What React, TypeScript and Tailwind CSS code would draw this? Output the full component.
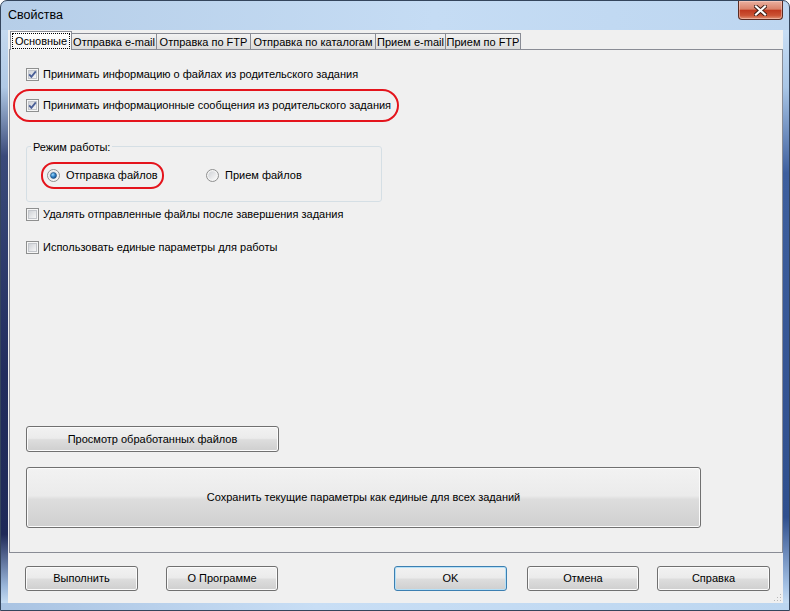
import React from 'react';
import clsx from 'clsx';

const TABS = [
  { label: 'Основные', w: 'w-[62px]' },
  { label: 'Отправка e-mail', w: 'w-[86px]' },
  { label: 'Отправка по FTP', w: 'w-[95px]' },
  { label: 'Отправка по каталогам', w: 'w-[126px]' },
  { label: 'Прием e-mail', w: 'w-[71px]' },
  { label: 'Прием по FTP', w: 'w-[76px]' },
];

function CheckBox({ checked }: { checked?: boolean }) {
  return (
    <svg width="13" height="13" viewBox="0 0 13 13" className="shrink-0">
      <defs>
        <linearGradient id="cbFill" x1="0" y1="0" x2="1" y2="1">
          <stop offset="0" stopColor="#cdd0d5" />
          <stop offset="1" stopColor="#f8f8f8" />
        </linearGradient>
      </defs>
      <rect x="0.5" y="0.5" width="12" height="12" fill="#f6f6f6" stroke="#8e8f8f" />
      <rect x="2.5" y="2.5" width="8" height="8" fill="url(#cbFill)" stroke="#c3c6cb" />
      {checked && (
        <path d="M3.2 6.3 L5.4 8.9 L9.8 3.4" fill="none" stroke="#4a5f97" strokeWidth="1.8" />
      )}
    </svg>
  );
}

function Radio({ checked }: { checked?: boolean }) {
  return (
    <svg width="13" height="13" viewBox="0 0 13 13" className="shrink-0">
      <defs>
        <linearGradient id="rbFill" x1="0" y1="0" x2="1" y2="1">
          <stop offset="0" stopColor="#cfd2d6" />
          <stop offset="1" stopColor="#fafafa" />
        </linearGradient>
        <radialGradient id="rbDot" cx="0.38" cy="0.35" r="0.7">
          <stop offset="0" stopColor="#9fdcff" />
          <stop offset="0.55" stopColor="#2f7fc4" />
          <stop offset="1" stopColor="#154f8a" />
        </radialGradient>
      </defs>
      <circle cx="6.5" cy="6.5" r="6" fill="#f4f4f4" stroke="#8e8f8f" />
      <circle cx="6.5" cy="6.5" r="4.3" fill="url(#rbFill)" />
      {checked && <circle cx="6.5" cy="6.5" r="3" fill="url(#rbDot)" stroke="#1c4f7e" strokeWidth="0.6" />}
    </svg>
  );
}

function Btn({
  children,
  className,
  isDefault,
}: {
  children: React.ReactNode;
  className?: string;
  isDefault?: boolean;
}) {
  return (
    <div
      className={clsx(
        'flex items-center justify-center rounded-[3px] border bg-[linear-gradient(to_bottom,#f2f2f2_0%,#ebebeb_47%,#dddddd_53%,#cfcfcf_100%)]',
        isDefault
          ? 'border-[#3c7fb1] shadow-[inset_0_0_0_1px_#b5e0f7]'
          : 'border-[#707070] shadow-[inset_0_0_0_1px_#fbfbfb]',
        className,
      )}
    >
      {children}
    </div>
  );
}

export default function App() {
  return (
    <div className="w-[790px] h-[611px] flex flex-col overflow-hidden rounded-t-[7px] border border-[#34455c] bg-[linear-gradient(to_right,#b6cee8,#c5dcf4_55%,#bdd6f0)] font-['Liberation_Sans',Arial,sans-serif] text-[11px] leading-[13px] text-black">
      {/* title bar */}
      <div className="h-[29px] flex items-start justify-between pl-[7px] pr-[6px] shrink-0">
        <span className="pt-[7px] text-[12.5px] leading-[15px]">Свойства</span>
        <div className="w-[45px] h-[19px] flex items-center justify-center rounded-b-[4px] border border-t-0 border-[#5a2b22] bg-[linear-gradient(to_bottom,#eab0a0_0%,#d9826a_45%,#c0391f_52%,#cb5234_80%,#e19174_100%)] shadow-[inset_0_0_0_1px_rgba(255,220,210,0.45)]">
          <svg width="13" height="11" viewBox="0 0 13 11">
            <path d="M2 1.5 L11 9.5 M11 1.5 L2 9.5" stroke="#3d1c14" strokeWidth="4" strokeLinecap="square" />
            <path d="M2 1.5 L11 9.5 M11 1.5 L2 9.5" stroke="#ffffff" strokeWidth="2.2" strokeLinecap="square" />
          </svg>
        </div>
      </div>

      <div className="flex flex-1 min-h-0">
        <div className="w-[7px] shrink-0 bg-[linear-gradient(to_bottom,#c4d9ef_0%,#b0c9e5_10%,#3a4a7a_22%,#222d5e_60%,#1f2a58_88%,#9ab6da_97%,#c4dbf2_100%)]" />

        {/* client area */}
        <div className="w-[775px] shrink-0 relative flex flex-col bg-[#f0f0f0]">
          {/* tab strip */}
          <div className="relative z-10 flex items-end h-[19px] pt-px pl-[2px] whitespace-nowrap">
            {TABS.map((t, i) =>
              i === 0 ? (
                <div
                  key={t.label}
                  className={clsx(t.w, 'h-[19px] -mb-px border border-b-0 border-[#898c95] bg-[linear-gradient(to_bottom,#ffffff,#f6f6f6)] p-px')}
                >
                  <div className="h-full flex items-center justify-center border border-dotted border-black">{t.label}</div>
                </div>
              ) : (
                <div
                  key={t.label}
                  className={clsx(t.w, 'h-[16px] -ml-px border border-b-0 border-[#898c95] bg-[linear-gradient(to_bottom,#f2f2f2,#dcdcdc)] flex items-center justify-center pt-px')}
                >
                  {t.label}
                </div>
              ),
            )}
          </div>

          {/* tab page */}
          <div className="flex-1 ml-px border border-[#898c95] bg-[#f0f0f0] flex flex-col pl-[16px] pt-[18px] pb-[24px]">
            <div className="h-[13px] flex items-center gap-[4px]">
              <CheckBox checked />
              <span>Принимать информацию о файлах из родительского задания</span>
            </div>
            <div className="relative mt-[18px] h-[13px] flex items-center gap-[4px]">
              <CheckBox checked />
              <span>Принимать информационные сообщения из родительского задания</span>
              <div className="absolute -left-[13px] -top-[10px] w-[386px] h-[33px] rounded-[17px] border-2 border-[#e4141c]" />
            </div>

            <div className="mt-[34px] w-[356px] h-[56px] border border-[#d5dfe5] rounded-[3px] flex flex-col">
              <span className="block w-fit -mt-[6px] ml-[4px] px-[2px] bg-[#f0f0f0]">Режим работы:</span>
              <div className="mt-[15px] pl-[20px] flex items-center">
                <div className="relative w-[159px] flex items-center gap-[6px]">
                  <Radio checked />
                  <span>Отправка файлов</span>
                  <div className="absolute -left-[6px] -top-[7px] w-[123px] h-[27px] rounded-[13px] border-2 border-[#e4141c]" />
                </div>
                <div className="flex items-center gap-[6px]">
                  <Radio />
                  <span>Прием файлов</span>
                </div>
              </div>
            </div>

            <div className="mt-[6px] h-[13px] flex items-center gap-[4px]">
              <CheckBox />
              <span>Удалять отправленные файлы после завершения задания</span>
            </div>
            <div className="mt-[20px] h-[13px] flex items-center gap-[4px]">
              <CheckBox />
              <span>Использовать единые параметры для работы</span>
            </div>

            <Btn className="mt-auto w-[253px] h-[26px]">Просмотр обработанных файлов</Btn>
            <Btn className="mt-[15px] w-[675px] h-[61px]">Сохранить текущие параметры как единые для всех заданий</Btn>
          </div>

          {/* footer buttons */}
          <div className="h-[50px] shrink-0 flex items-center pl-[17px] pr-[13px]">
            <Btn className="w-[113px] h-[25px]">Выполнить</Btn>
            <Btn className="ml-[28px] w-[112px] h-[25px]">О Программе</Btn>
            <Btn isDefault className="ml-auto w-[113px] h-[25px]">OK</Btn>
            <Btn className="ml-[20px] w-[112px] h-[25px]">Отмена</Btn>
            <Btn className="ml-[18px] w-[113px] h-[25px]">Справка</Btn>
          </div>

          <svg width="8" height="8" viewBox="0 0 8 8" className="absolute right-[1px] bottom-[1px]">
            <g fill="#b8b8b8">
              <rect x="6" y="0" width="1" height="1" />
              <rect x="3" y="3" width="1" height="1" />
              <rect x="6" y="3" width="1" height="1" />
              <rect x="0" y="6" width="1" height="1" />
              <rect x="3" y="6" width="1" height="1" />
              <rect x="6" y="6" width="1" height="1" />
            </g>
          </svg>
        </div>

        <div className="flex-1 bg-[linear-gradient(to_bottom,#c8def5_0%,#a9c6e6_10%,#3e5f9e_25%,#2f4f8e_85%,#a4c1e4_97%,#c4dbf2_100%)]" />
      </div>
      <div className="h-[7px] shrink-0 bg-[linear-gradient(to_right,#a9c3e2,#c8def5_40%,#bcd6f0)]" />
    </div>
  );
}
